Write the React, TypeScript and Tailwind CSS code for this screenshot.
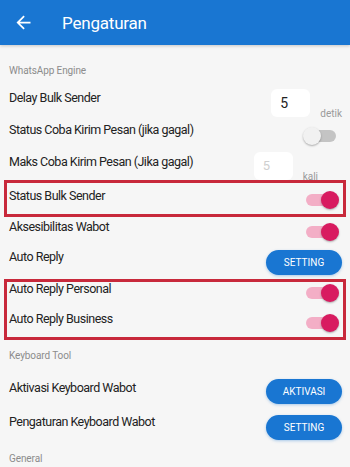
const Toggle = ({ on }: { on: boolean }) => (
  <div className="relative h-[20px] w-[36px]">
    <div
      className={`absolute left-[3px] top-[4px] h-[12px] w-[30px] rounded-full ${
        on ? "bg-[#f3aec6]" : "bg-[#c4c4c4]"
      }`}
    ></div>
    <div
      className={`absolute top-[1px] h-[18px] w-[18px] rounded-full shadow-[0_1px_2px_rgba(0,0,0,0.3)] ${
        on ? "left-[18px] bg-[#d81b60]" : "left-0 bg-[#f1f1f1]"
      }`}
    ></div>
  </div>
);

const Btn = ({ label }: { label: string }) => (
  <div className="flex h-[25px] w-[76px] items-center justify-center rounded-full bg-[#1976d2] text-[10px] font-normal tracking-[0px] text-white shadow-[0_1px_3px_rgba(25,118,210,0.35)]">
    {label}
  </div>
);

const SectionLabel = ({ text, pt }: { text: string; pt: string }) => (
  <div
    className={`${pt} pl-[9px] text-[10px] leading-[12px] tracking-[-0.1px] text-[#8c8c8c]`}
  >
    {text}
  </div>
);

const App = () => {
  return (
    <div className="h-[467px] w-[350px] overflow-hidden bg-[#f6f6f6] font-['Roboto',sans-serif] text-[12.5px] leading-[16px] tracking-[-0.5px] text-[#222]">
      <header className="flex h-[45px] items-center bg-[#1976d2] shadow-[0_1px_3px_rgba(0,0,0,0.2)]">
        <svg
          width="21"
          height="21"
          viewBox="0 0 24 24"
          fill="white"
          className="ml-[13px]"
        >
          <path d="M20 11H7.83l5.59-5.59L12 4l-8 8 8 8 1.41-1.41L7.83 13H20v-2z" />
        </svg>
        <h1 className="ml-[28px] text-[17px] leading-[20px] tracking-[-0.2px] text-white">
          Pengaturan
        </h1>
      </header>

      <SectionLabel text="WhatsApp Engine" pt="pt-[20px] h-[32px]" />

      <div className="flex h-[40px] justify-between pl-[9px] pr-[8px]">
        <p className="pt-[13px]">Delay Bulk Sender</p>
        <div className="flex items-end gap-[10px] pt-[8px]">
          <div className="flex h-[28px] w-[39px] items-center rounded-[6px] bg-white pl-[9px] text-[14px]">
            5
          </div>
          <span className="-mb-[2px] text-[10px] leading-none tracking-[0px] text-[#9a9a9a]">
            detik
          </span>
        </div>
      </div>

      <div className="flex h-[28px] justify-between pl-[9px] pr-[11px]">
        <p className="pt-[5px]">Status Coba Kirim Pesan (jika gagal)</p>
        <div className="pt-[9px]">
          <Toggle on={false} />
        </div>
      </div>

      <div className="flex h-[35px] justify-between pl-[9px] pr-[32px]">
        <p className="pt-[9px]">Maks Coba Kirim Pesan (Jika gagal)</p>
        <div className="flex items-end gap-[10px] pt-[3px]">
          <div className="flex h-[28px] w-[39px] items-center rounded-[6px] bg-white pl-[9px] text-[13px] text-[#cfcfcf]">
            5
          </div>
          <span className="-mb-[2px] text-[10px] leading-none tracking-[0px] text-[#9a9a9a]">
            kali
          </span>
        </div>
      </div>

      <div className="mx-[4px] flex h-[37px] justify-between border-[3px] border-[#c8293b] pl-[2px] pr-[4px]">
        <p className="pt-[5px]">Status Bulk Sender</p>
        <div className="pt-[7px]">
          <Toggle on />
        </div>
      </div>

      <div className="flex h-[29px] justify-between pl-[9px] pr-[11px]">
        <p className="pt-[2px]">Aksesibilitas Wabot</p>
        <div className="pt-[5px]">
          <Toggle on />
        </div>
      </div>

      <div className="flex h-[33px] justify-between pl-[9px] pr-[8px]">
        <p className="pt-[3px]">Auto Reply</p>
        <div className="pt-[4px]">
          <Btn label="SETTING" />
        </div>
      </div>

      <div className="mx-[4px] border-[3px] border-[#c8293b] pl-[2px] pr-[4px]">
        <div className="flex h-[28px] justify-between">
          <p className="-mt-[1px]">Auto Reply Personal</p>
          <div className="pt-[1px]">
            <Toggle on />
          </div>
        </div>
        <div className="flex h-[27px] justify-between">
          <p className="pt-[1px]">Auto Reply Business</p>
          <div className="pt-[3px]">
            <Toggle on />
          </div>
        </div>
      </div>

      <SectionLabel text="Keyboard Tool" pt="pt-[10px] h-[30px]" />

      <div className="flex h-[39px] justify-between pl-[9px] pr-[8px]">
        <p className="pt-[10px]">Aktivasi Keyboard Wabot</p>
        <div className="pt-[9px]">
          <Btn label="AKTIVASI" />
        </div>
      </div>

      <div className="flex h-[34px] justify-between pl-[9px] pr-[8px]">
        <p className="pt-[5px]">Pengaturan Keyboard Wabot</p>
        <div className="pt-[6px]">
          <Btn label="SETTING" />
        </div>
      </div>

      <SectionLabel text="General" pt="pt-[10px]" />
    </div>
  );
};

export default App;
